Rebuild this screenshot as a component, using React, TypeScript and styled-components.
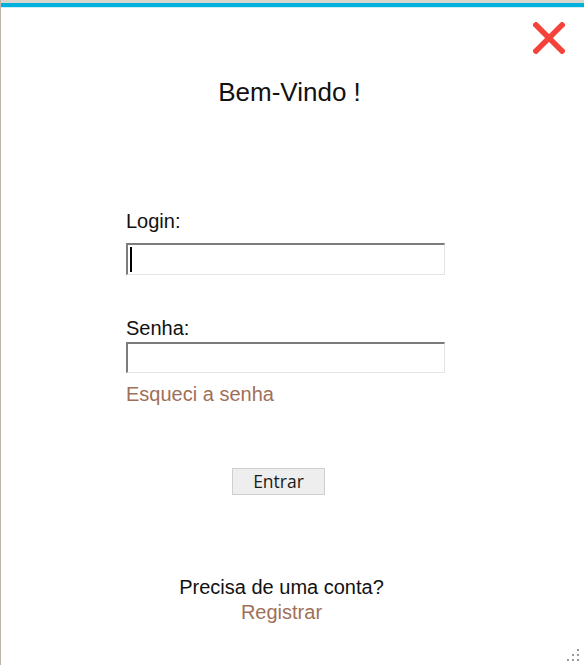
import React from "react";
import styled, { createGlobalStyle } from "styled-components";

const GlobalStyle = createGlobalStyle`
  html, body { margin: 0; padding: 0; background: #ffffff; }
  body { font-family: "Liberation Sans", Arial, sans-serif; }
  * { box-sizing: border-box; }
`;

const Window = styled.div`
  position: relative;
  display: flex;
  flex-direction: column;
  width: 584px;
  height: 665px;
  background: #ffffff;
  border-left: 1px solid #bdb6ae;
  overflow: hidden;
`;

const TitleStrip = styled.div`
  height: 3px;
  background: #d9d5cf;
`;

const AccentBar = styled.div`
  height: 5px;
  background: #00b0dd;
  border-bottom: 1px solid #c9eef8;
`;

const TopRow = styled.div`
  display: flex;
  justify-content: flex-end;
  padding: 14px 19px 0 0;
`;

const CloseButton = styled.button`
  width: 32px;
  height: 32px;
  padding: 0;
  border: 0;
  background: transparent;
  cursor: pointer;
  display: flex;
`;

const Heading = styled.h1`
  margin: 23px 0 0;
  padding-right: 6px;
  text-align: center;
  font-family: "Liberation Sans", Arial, sans-serif;
  font-weight: 400;
  font-size: 26px;
  line-height: 30px;
  color: #111111;
`;

const Form = styled.form`
  display: flex;
  flex-direction: column;
  align-items: flex-start;
  margin: 0 0 0 125px;
  width: 319px;
`;

const Label = styled.label<{ $gap: number }>`
  margin-top: ${(p) => p.$gap}px;
  font-size: 20px;
  line-height: 23px;
  color: #111111;
`;

const FieldWrap = styled.div<{ $gap: number; $h: number }>`
  position: relative;
  margin-top: ${(p) => p.$gap}px;
  width: 319px;
  height: ${(p) => p.$h}px;
`;

const TextInput = styled.input`
  display: block;
  width: 100%;
  height: 100%;
  margin: 0;
  padding: 0 3px;
  font-family: "Liberation Sans", Arial, sans-serif;
  font-size: 18px;
  background: #ffffff;
  border-style: solid;
  border-width: 2px 1px 1px 2px;
  border-color: #7c7c7c #e4e4e4 #e4e4e4 #7c7c7c;
  outline: none;
`;

const Caret = styled.span`
  position: absolute;
  left: 4px;
  top: 4px;
  width: 2px;
  height: 25px;
  background: #000000;
`;

const LinkText = styled.a<{ $gap: number }>`
  margin-top: ${(p) => p.$gap}px;
  font-size: 20px;
  line-height: 23px;
  color: #9f7058;
  text-decoration: none;
  cursor: pointer;
`;

const SubmitButton = styled.button`
  margin: 62px 0 0 106px;
  width: 93px;
  height: 27px;
  padding: 0 0 1px;
  font-family: "Open Sans", "Noto Sans", sans-serif;
  font-size: 17.5px;
  line-height: 24px;
  color: #1a1a1a;
  background: #eeeeee;
  border: 1px solid #cfcfcf;
  border-radius: 0;
`;

const Footer = styled.div`
  display: flex;
  flex-direction: column;
  align-items: center;
  margin: 80px 0 0 124px;
  width: 313px;
  font-size: 20px;
  line-height: 25px;
  color: #111111;
`;

const FooterLink = styled.a`
  color: #9f7058;
  text-decoration: none;
  cursor: pointer;
`;

const Grip = styled.div`
  position: absolute;
  right: 5px;
  bottom: 4px;
  width: 12px;
  height: 12px;
`;

const GripDot = styled.span`
  position: absolute;
  width: 2px;
  height: 2px;
  background: #9a9a9a;
`;

const gripDots = [
  [10, 0],
  [5, 5],
  [10, 5],
  [0, 10],
  [5, 10],
  [10, 10],
];

export default function App() {
  return (
    <>
      <GlobalStyle />
      <Window>
        <TitleStrip />
        <AccentBar />
        <TopRow>
          <CloseButton aria-label="Fechar">
            <svg width="32" height="32" viewBox="0 0 32 32">
              <path
                d="M3 3 L29 29 M29 3 L3 29"
                stroke="#f4433a"
                strokeWidth="5.5"
                strokeLinecap="square"
                fill="none"
              />
            </svg>
          </CloseButton>
        </TopRow>
        <Heading>Bem-Vindo !</Heading>
        <Form onSubmit={(e) => e.preventDefault()}>
          <Label $gap={103}>Login:</Label>
          <FieldWrap $gap={10} $h={32}>
            <TextInput type="text" />
            <Caret />
          </FieldWrap>
          <Label $gap={42}>Senha:</Label>
          <FieldWrap $gap={2} $h={31}>
            <TextInput type="password" />
          </FieldWrap>
          <LinkText $gap={10}>Esqueci a senha</LinkText>
          <SubmitButton type="submit">Entrar</SubmitButton>
        </Form>
        <Footer>
          <span>Precisa de uma conta?</span>
          <FooterLink>Registrar</FooterLink>
        </Footer>
        <Grip>
          {gripDots.map(([x, y], i) => (
            <GripDot key={i} style={{ left: x, top: y }} />
          ))}
        </Grip>
      </Window>
    </>
  );
}
